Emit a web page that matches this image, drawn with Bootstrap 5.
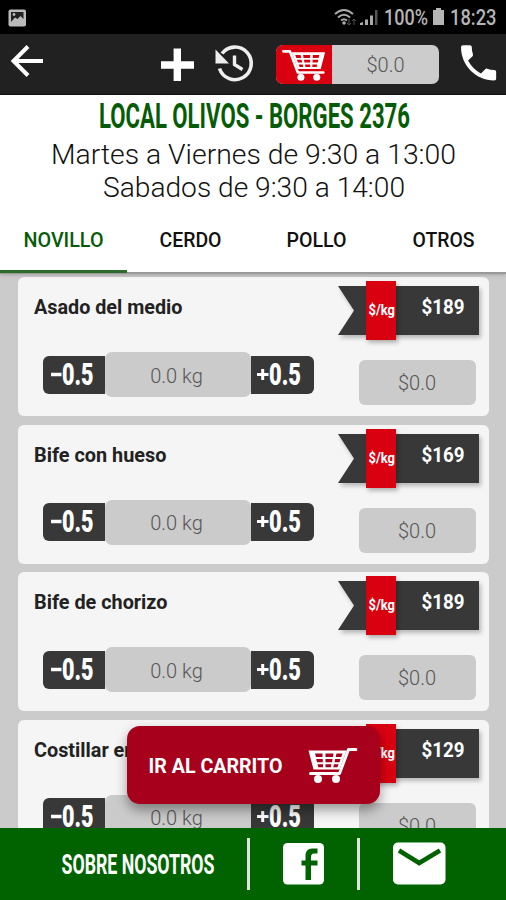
<!DOCTYPE html>
<html lang="es">
<head>
<meta charset="utf-8">
<meta name="viewport" content="width=device-width, initial-scale=1">
<title>Local Olivos</title>
<link href="https://cdn.jsdelivr.net/npm/bootstrap@5.3.0/dist/css/bootstrap.min.css" rel="stylesheet">
<style>
body{font-family:Roboto,"Liberation Sans",sans-serif;background:#cbcbcb;height:900px;overflow:hidden}
svg{display:block;flex:none;overflow:visible}
svg text{font-family:Roboto,"Liberation Sans",sans-serif}
.app{width:506px;height:900px;position:relative;overflow:hidden}
.status{height:34px;background:#000;padding:2px 9px 0 8px}
.topbar{height:61px;background:#212121;border-bottom:1px solid #111}
.total{width:163px;height:39px;border-radius:7px;background:#ccc;overflow:hidden;margin:11px 0 0 276px}
.total-icon{width:56px;background:#d9000f}
.value{font-weight:300;color:#555;font-size:20px}
.store{height:179px;background:#fff;border-bottom:2px solid #999;box-shadow:0 1px 4px rgba(0,0,0,.2);z-index:2;position:relative}
.tabs{height:67px}
.tab{width:126.5px;height:67px;border-bottom:3px solid transparent;color:#111}
.tab-on{color:#065c06;border-color:#2d6b2d;position:relative;z-index:1;height:68px}
.items{padding:3px 17px 0 18px;gap:8.5px}
.item{height:139px;background:#f5f5f5;border-radius:6px;position:relative}
.item-head{height:66px;padding:4px 10px 0 16px}
.item-foot{padding:9px 13.5px 0 24.5px}
.step{width:62.5px;height:38px;background:#383838}
.step-l{border-radius:6px 0 0 6px}.step-r{border-radius:0 6px 6px 0}
.kilos{width:146px;height:45px;border-radius:7px;background:#cbcbcb;padding:2px 3px 0 0}
.sub{width:117px;height:45px;border-radius:6px;background:#cbcbcb;margin-top:8px;padding-top:1px}
.go{position:absolute;left:127px;top:726px;width:253px;height:78px;border-radius:13px;background:#a6001c;box-shadow:0 6px 12px rgba(0,0,0,.38);z-index:3;padding:0 22px}
.footbar{position:absolute;left:0;right:0;bottom:0;height:72px;background:#006300;z-index:4}
.sep{width:3px;height:52px;background:#dbe8db}
.shadowed{filter:drop-shadow(2px 3px 2px rgba(0,0,0,.25))}
</style>
<script src="https://cdn.jsdelivr.net/npm/bootstrap@5.3.0/dist/js/bootstrap.bundle.min.js"></script>
</head>
<body>
<svg width="0" height="0" class="position-absolute">
<symbol id="cart" viewBox="0 0 50 36">
<path d="M1.500 2.500H9L18 26.500H47" fill="none" stroke="#fff" stroke-width="3" stroke-linecap="round" stroke-linejoin="round"/>
<path d="M11 3.500H49L44 22.500H18ZM15 6.500L16.300 10H21.800L21 6.500ZM24 6.500L24.500 10H32V6.500ZM35 6.500V10H41.500L42.500 6.500ZM17 12L18 15.300H23L22.300 12ZM25 12L25.500 15.300H32V12ZM34.700 12V15.300H40.500L41.300 12ZM19 17.300L20 20.300H24.200L23.600 17.300ZM26.200 17.300L26.600 20.300H32V17.300ZM34.500 17.300V20.300H39.300L40 17.300Z" fill="#fff" fill-rule="evenodd"/>
<circle cx="21.500" cy="32" r="4" fill="#fff"/><circle cx="39.500" cy="32" r="4" fill="#fff"/>
</symbol>
</svg>
<div class="app d-flex flex-column">
  <div class="status d-flex align-items-center justify-content-between">
    <svg width="19" height="18" viewBox="0 0 19 18"><rect x=".5" y=".5" width="17.500" height="17" rx="2" fill="#bbb"/><path d="M3 3H15.500V10L12.500 7L9.500 10L7 8.500L3 13Z" fill="#222"/><circle cx="6" cy="5.500" r="1.400" fill="#bbb"/></svg>
    <svg width="163" height="22" viewBox="0 0 163 22">
      <g fill="none" stroke="#aaa" stroke-width="2"><path d="M1 7Q10 -1 19 7M4 10.500Q10 5 16 10.500M7 13.500Q10 11 13 13.500"/></g>
      <circle cx="10" cy="16" r="1.800" fill="#aaa"/>
      <path d="M13 16L15 18L17 16M15 12V17M18 14L20 12L22 14M20 13V18" stroke="#555" fill="none"/>
      <path d="M26 18V16L29 15V18ZM31 18V12.500H34V18ZM36 18V8.500H39V18Z" fill="#aaa"/><path d="M41 3H43.500V18H41Z" fill="#555"/>
      <text x="50" y="18" font-size="21.500" font-weight="500" fill="#b5b5b5" textLength="44" lengthAdjust="spacingAndGlyphs">100%</text>
      <path d="M99 3H102V1H107V3H110V18H99Z" fill="#b5b5b5"/>
      <text x="116" y="18" font-size="21.500" font-weight="500" fill="#b5b5b5" textLength="46.500" lengthAdjust="spacingAndGlyphs">18:23</text>
    </svg>
  </div>
  <nav class="topbar d-flex align-items-start">
    <svg width="506" height="60" viewBox="0 0 506 60" class="position-absolute">
      <path d="M43 27H14M28 12.500L13.500 27L28 41.500" fill="none" stroke="#fff" stroke-width="4"/>
      <path d="M161 31H194M177.300 14.500V47" stroke="#fff" stroke-width="7.400"/>
      <path d="M219.500 34.500A16.300 16.300 0 1 0 222 19.500" fill="none" stroke="#eee" stroke-width="3.600"/>
      <path d="M215.500 15.500V29.500H229Z" fill="#eee"/><path d="M234.500 21.500V30.500L242.500 35.500" fill="none" stroke="#eee" stroke-width="3.400"/>
      <path transform="translate(455.200 5.500) scale(1.950)" fill="#fff" d="M6.600 10.800c1.500 2.800 3.800 5.100 6.600 6.600l2.200-2.200c.3-.3.700-.4 1-.2 1.100.4 2.300.6 3.600.6.600 0 1 .4 1 1V20c0 .6-.4 1-1 1C10.600 21 3 13.400 3 4c0-.6.400-1 1-1h3.500c.6 0 1 .4 1 1 0 1.200.2 2.500.6 3.600.1.300 0 .7-.2 1z"/>
    </svg>
    <div class="total d-flex">
      <div class="total-icon d-flex align-items-center justify-content-center"><svg width="44" height="32"><use href="#cart"/></svg></div>
      <div class="flex-fill d-flex align-items-center justify-content-center value"><span>$0.0</span></div>
    </div>
  </nav>
  <header class="store">
    <svg width="506" height="110" viewBox="0 0 506 110">
      <text x="99" y="33" font-size="34.500" font-weight="700" fill="#065c06" textLength="311" lengthAdjust="spacingAndGlyphs">LOCAL OLIVOS - BORGES 2376</text>
      <g font-size="27.600" font-weight="300" fill="#111"><text x="51" y="69" textLength="405" lengthAdjust="spacingAndGlyphs">Martes a Viernes de 9:30 a 13:00</text>
      <text x="103" y="102" textLength="302" lengthAdjust="spacingAndGlyphs">Sabados de 9:30 a 14:00</text></g>
    </svg>
    <div class="tabs d-flex">
      <div class="tab tab-on"><svg width="126" height="61"><text x="23.500" y="42" font-size="20" font-weight="500" fill="currentColor" textLength="80" lengthAdjust="spacingAndGlyphs">NOVILLO</text></svg></div>
      <div class="tab"><svg width="126" height="61"><text x="32.500" y="42" font-size="20" font-weight="500" fill="currentColor" textLength="62" lengthAdjust="spacingAndGlyphs">CERDO</text></svg></div>
      <div class="tab"><svg width="126" height="61"><text x="33.500" y="42" font-size="20" font-weight="500" fill="currentColor" textLength="60" lengthAdjust="spacingAndGlyphs">POLLO</text></svg></div>
      <div class="tab"><svg width="126" height="61"><text x="32.500" y="42" font-size="20" font-weight="500" fill="currentColor" textLength="62" lengthAdjust="spacingAndGlyphs">OTROS</text></svg></div>
    </div>
  </header>
  <main class="items d-flex flex-column" id="items"></main>
  <div class="go d-flex align-items-center justify-content-between">
    <svg width="134" height="30"><text x="-.5" y="23" font-size="20.500" font-weight="700" fill="#fff" textLength="134" lengthAdjust="spacingAndGlyphs">IR AL CARRITO</text></svg>
    <svg width="51" height="36" viewBox="0 0 50 36"><g transform="translate(50 0) scale(-1 1)"><use href="#cart" width="50" height="36"/></g></svg>
  </div>
  <footer class="footbar d-flex align-items-center">
    <svg width="247" height="72"><text x="61.500" y="46" font-size="27.500" font-weight="700" fill="#fff" textLength="153" lengthAdjust="spacingAndGlyphs">SOBRE NOSOTROS</text></svg>
    <div class="sep"></div>
    <svg width="107" height="72"><rect x="33" y="15" width="41" height="41.500" rx="4.500" fill="#fff"/><path d="M55.500 52V37.500H51.500V32.500H55.500V28Q55.500 20.500 62 20.500H67.500V25.500H64Q61 25.500 61 29V32.500H67.500V37.500H61V52Z" fill="#006300"/></svg>
    <div class="sep"></div>
    <svg width="140" height="72"><rect x="33" y="14.500" width="52.500" height="42" rx="5" fill="#fff"/><path d="M39 22.500L59.200 35L80 22.500" fill="none" stroke="#006300" stroke-width="4.500"/></svg>
  </footer>
</div>
<script>
const items=[["Asado del medio",189,148.5],["Bife con hueso",169,132.5],["Bife de chorizo",189,133.5],["Costillar entero",129,137]];
document.getElementById("items").innerHTML=items.map(([name,price,w])=>`
<section class="item">
  <div class="item-head d-flex justify-content-between">
    <svg width="200" height="50"><text x="0" y="32.500" font-size="19.500" font-weight="700" fill="#222" textLength="${w}" lengthAdjust="spacingAndGlyphs">${name}</text></svg>
    <svg width="141" height="60">
      <path class="shadowed" d="M0 5H141V54H0L16 29.500Z" fill="#383838"/>
      <rect class="shadowed" x="28" y="0" width="30" height="59" fill="#d9000f"/>
      <text x="30.500" y="33.500" font-size="15" font-weight="700" fill="#fff" textLength="26.500" lengthAdjust="spacingAndGlyphs">$/kg</text>
      <text x="83.500" y="33" font-size="20" font-weight="700" fill="#fff" textLength="43" lengthAdjust="spacingAndGlyphs">$${price}</text>
    </svg>
  </div>
  <div class="item-foot d-flex justify-content-between align-items-start">
    <div class="d-flex align-items-center">
      <div class="step step-l"><svg width="62" height="38"><path d="M8 18.500H18.500" stroke="#fff" stroke-width="3.500"/><text x="19" y="29.300" font-size="32" font-weight="900" fill="#fff" textLength="31.500" lengthAdjust="spacingAndGlyphs">0.5</text></svg></div>
      <div class="kilos d-flex align-items-center justify-content-center value">0.0 kg</div>
      <div class="step step-r"><svg width="62" height="38"><path d="M6 18.500H17.500M11.700 13V24" stroke="#fff" stroke-width="3"/><text x="18" y="29.300" font-size="32" font-weight="900" fill="#fff" textLength="32" lengthAdjust="spacingAndGlyphs">0.5</text></svg></div>
    </div>
    <div class="sub d-flex align-items-center justify-content-center value">$0.0</div>
  </div>
</section>`).join("");
</script>
</body>
</html>
